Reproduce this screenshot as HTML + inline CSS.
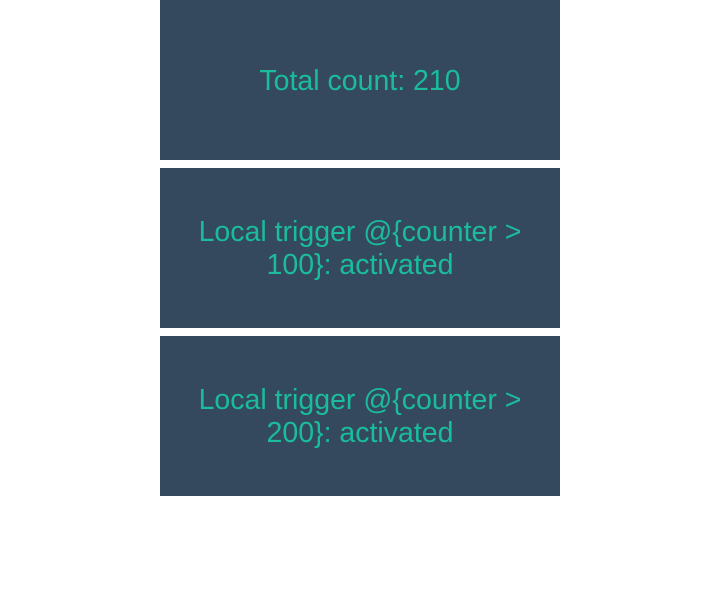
<!DOCTYPE html>
<html><head><style>
html,body{margin:0;padding:0;background:#fff;width:720px;height:600px;overflow:hidden}
.b{position:absolute;left:160px;width:400px;height:160px;background:#34495e;color:#1abc9c;font-family:"Liberation Sans",sans-serif;font-size:28.5px;line-height:33px;display:flex;align-items:center;justify-content:center;text-align:center;white-space:nowrap;padding-top:2px;box-sizing:border-box}
</style></head><body>
<div class="b" style="top:0">Total count: 210</div>
<div class="b" style="top:168px">Local trigger @{counter &gt;<br>100}: activated</div>
<div class="b" style="top:336px">Local trigger @{counter &gt;<br>200}: activated</div>
</body></html>
